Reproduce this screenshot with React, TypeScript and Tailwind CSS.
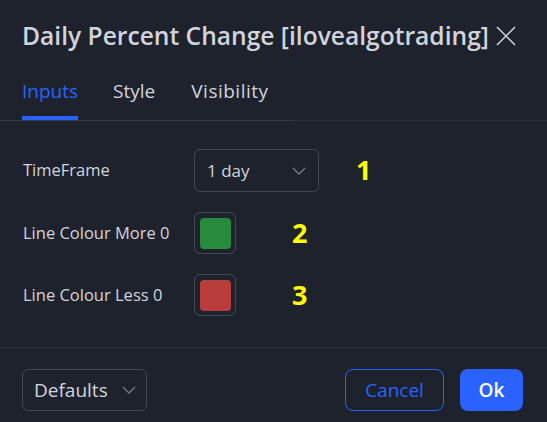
import React from "react";

function Chevron({ className }: { className?: string }) {
  return (
    <svg width="14" height="8" viewBox="0 0 14 8" className={className}>
      <path d="M1 1l6 6 6-6" fill="none" stroke="currentColor" strokeWidth="1.3" />
    </svg>
  );
}

function Swatch({ color }: { color: string }) {
  return (
    <div className="w-[42px] h-[42px] rounded-[6px] border border-[#434651] flex items-center justify-center">
      <div className="w-[31px] h-[31px] rounded-[4px]" style={{ backgroundColor: color }} />
    </div>
  );
}

export default function App() {
  return (
    <div
      className="w-[547px] h-[422px] bg-[#1e222d] text-[#d1d4dc] flex flex-col overflow-hidden"
      style={{ fontFamily: '"Open Sans", "Liberation Sans", sans-serif' }}
    >
      {/* header */}
      <div className="flex items-center justify-between pl-[22px] pr-[31px] pt-[19px] h-[53px]">
        <h1 className="text-[24.6px] font-semibold leading-[32px]">
          Daily Percent Change [ilovealgotrading]
        </h1>
        <svg width="20" height="20" viewBox="0 0 20 20" className="text-[#d1d4dc]">
          <path d="M1 1l18 18M19 1L1 19" stroke="currentColor" strokeWidth="1.5" />
        </svg>
      </div>

      {/* tabs */}
      <div className="border-b border-[#2a2e39] mt-[25px]">
        <div className="flex w-[294px] pl-[22px] border-b border-[#363a45] -mb-px">
          <div className="flex flex-col">
            <span className="text-[19px] leading-[26px] text-[#2962ff]">Inputs</span>
            <div className="h-[4px] bg-[#2962ff] mt-[12px]" />
          </div>
          <span className="ml-[35px] text-[19px] leading-[26px]">Style</span>
          <span className="ml-[36px] text-[19px] leading-[26px] tracking-[0.5px]">Visibility</span>
        </div>
      </div>

      {/* inputs */}
      <div className="flex flex-col gap-[20px] pt-[28px] pl-[23px] h-[226px]">
        <div className="flex items-center">
          <span className="w-[171px] text-[16.5px]">TimeFrame</span>
          <div className="w-[125px] h-[43px] rounded-[6px] border border-[#434651] flex items-center justify-between pl-[12px] pr-[12px]">
            <span className="text-[17px]">1 day</span>
            <Chevron className="text-[#787b86]" />
          </div>
          <span className="ml-[37px] text-[27px] font-bold text-[#ffff00]">1</span>
        </div>
        <div className="flex items-center">
          <span className="w-[171px] text-[16.5px]">Line Colour More 0</span>
          <Swatch color="#288a3c" />
          <span className="ml-[56px] text-[27px] font-bold text-[#ffff00]">2</span>
        </div>
        <div className="flex items-center">
          <span className="w-[171px] text-[16.5px]">Line Colour Less 0</span>
          <Swatch color="#ba3d3d" />
          <span className="ml-[56px] text-[27px] font-bold text-[#ffff00]">3</span>
        </div>
      </div>

      {/* footer */}
      <div className="border-t border-[#2a2e39] flex items-center justify-between px-[22px] pt-[21px] pr-[24px]">
        <button className="w-[125px] h-[42px] rounded-[6px] border border-[#434651] flex items-center justify-between pl-[11px] pr-[10px]">
          <span className="text-[19px]">Defaults</span>
          <Chevron className="text-[#787b86]" />
        </button>
        <div className="flex gap-[16px]">
          <button className="w-[99px] h-[42px] rounded-[8px] border border-[#2962ff] text-[#2962ff] text-[19px]">
            Cancel
          </button>
          <button className="w-[63px] h-[42px] rounded-[8px] bg-[#2962ff] text-white text-[19px] font-semibold">
            Ok
          </button>
        </div>
      </div>
    </div>
  );
}
